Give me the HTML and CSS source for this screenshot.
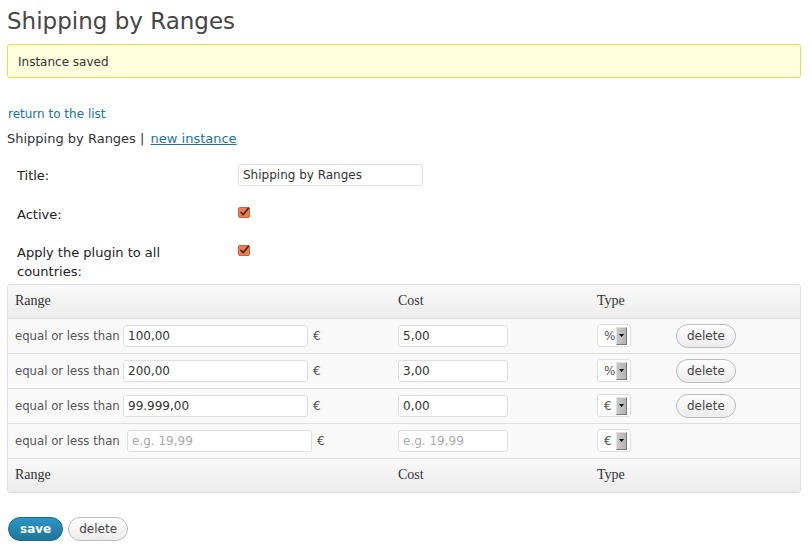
FILE: index.html
```html
<!DOCTYPE html>
<html lang="en">
<head>
<meta charset="utf-8">
<title>Shipping by Ranges</title>
<link rel="stylesheet" href="styles.css">
</head>
<body>
<div class="wrap">
  <h2 class="page-title">Shipping by Ranges</h2>
  <div class="notice"><p>Instance saved</p></div>
  <p class="back"><a href="#">return to the list</a></p>
  <p class="crumbs">Shipping by Ranges | <a class="ul" href="#">new instance</a></p>

  <table class="form-table">
    <tr class="r-title">
      <th>Title:</th>
      <td><input class="text title-input" type="text" value="Shipping by Ranges"></td>
    </tr>
    <tr class="r-check">
      <th>Active:</th>
      <td><svg class="cb" width="13" height="13" viewBox="0 0 13 13"><rect x="0.5" y="1.5" width="11" height="10" rx="1.5" fill="#ec7d55" stroke="#c9623f"/><path d="M3 6.4 L5.2 8.6 L10.4 2.2" fill="none" stroke="#4a2a1c" stroke-width="1.7" stroke-linecap="round" stroke-linejoin="round"/></svg></td>
    </tr>
    <tr class="r-apply">
      <th>Apply the plugin to all countries:</th>
      <td><svg class="cb" width="13" height="13" viewBox="0 0 13 13"><rect x="0.5" y="1.5" width="11" height="10" rx="1.5" fill="#ec7d55" stroke="#c9623f"/><path d="M3 6.4 L5.2 8.6 L10.4 2.2" fill="none" stroke="#4a2a1c" stroke-width="1.7" stroke-linecap="round" stroke-linejoin="round"/></svg></td>
    </tr>
  </table>

  <div class="ranges">
    <table class="widefat">
      <thead>
        <tr><th class="c-range">Range</th><th class="c-cost">Cost</th><th class="c-type">Type</th><th class="c-act"></th></tr>
      </thead>
      <tbody>
        <tr>
          <td><div class="cell"><span class="lbl">equal or less than</span><input class="text in-range" type="text" value="100,00"><span class="cur">€</span></div></td>
          <td><div class="cell"><input class="text in-cost" type="text" value="5,00"></div></td>
          <td><div class="cell"><span class="sel"><span class="sel-val">%</span><span class="sel-btn"><svg width="5" height="3" viewBox="0 0 5 3"><path d="M0 0H5L2.5 3Z" fill="#000"/></svg></span></span></div></td>
          <td><div class="cell"><button class="btn" type="button">delete</button></div></td>
        </tr>
        <tr>
          <td><div class="cell"><span class="lbl">equal or less than</span><input class="text in-range" type="text" value="200,00"><span class="cur">€</span></div></td>
          <td><div class="cell"><input class="text in-cost" type="text" value="3,00"></div></td>
          <td><div class="cell"><span class="sel"><span class="sel-val">%</span><span class="sel-btn"><svg width="5" height="3" viewBox="0 0 5 3"><path d="M0 0H5L2.5 3Z" fill="#000"/></svg></span></span></div></td>
          <td><div class="cell"><button class="btn" type="button">delete</button></div></td>
        </tr>
        <tr>
          <td><div class="cell"><span class="lbl">equal or less than</span><input class="text in-range" type="text" value="99.999,00"><span class="cur">€</span></div></td>
          <td><div class="cell"><input class="text in-cost" type="text" value="0,00"></div></td>
          <td><div class="cell"><span class="sel"><span class="sel-val">€</span><span class="sel-btn"><svg width="5" height="3" viewBox="0 0 5 3"><path d="M0 0H5L2.5 3Z" fill="#000"/></svg></span></span></div></td>
          <td><div class="cell"><button class="btn" type="button">delete</button></div></td>
        </tr>
        <tr>
          <td><div class="cell"><span class="lbl">equal or less than</span><input class="text in-range in-new" type="text" placeholder="e.g. 19,99"><span class="cur">€</span></div></td>
          <td><div class="cell"><input class="text in-cost" type="text" placeholder="e.g. 19,99"></div></td>
          <td><div class="cell"><span class="sel"><span class="sel-val">€</span><span class="sel-btn"><svg width="5" height="3" viewBox="0 0 5 3"><path d="M0 0H5L2.5 3Z" fill="#000"/></svg></span></span></div></td>
          <td><div class="cell"></div></td>
        </tr>
      </tbody>
      <tfoot>
        <tr><th>Range</th><th>Cost</th><th>Type</th><th></th></tr>
      </tfoot>
    </table>
  </div>

  <div class="actions">
    <button class="btn btn-primary" type="button">save</button>
    <button class="btn" type="button">delete</button>
  </div>
</div>
</body>
</html>
```
FILE: styles.css
```css
html, body {
  margin: 0;
  padding: 0;
  background: #fff;
}
body {
  font-family: "DejaVu Sans", sans-serif;
  font-size: 13px;
  line-height: 18.2px;
  color: #333;
}
.wrap {
  padding: 0 11px 0 7px;
}
a {
  color: #21759b;
  text-decoration: none;
}
a.ul {
  text-decoration: underline;
  margin-left: 2px;
}
.page-title {
  margin: 7px 0 0;
  font-size: 23px;
  line-height: 29px;
  font-weight: normal;
  color: #464646;
}
.notice {
  margin-top: 8px;
  background: #ffffe0;
  border: 1px solid #e6db55;
  border-radius: 3px;
  padding: 9px 10px 7px;
}
.notice p {
  margin: 0;
  font-size: 12px;
  line-height: 16px;
}
.back {
  margin: 28px 0 0 1px;
  font-size: 12px;
  line-height: 16px;
}
.crumbs {
  margin: 8px 0 0;
  font-size: 13px;
  line-height: 18.2px;
}
.form-table {
  margin-top: 8px;
  border-collapse: collapse;
  width: 100%;
}
.form-table th {
  width: 200px;
  padding: 10px 10px 10px;
  text-align: left;
  vertical-align: top;
  font-weight: normal;
  color: #222;
  line-height: 18.2px;
}
.form-table td {
  padding: 8px 10px 10px;
  vertical-align: top;
  line-height: 20px;
}
.r-title th {
  padding-top: 11px;
}
.r-check td, .r-apply td {
  padding-top: 10px;
}
.r-apply th {
  padding-bottom: 3px;
}
.cb {
  display: block;
  margin-left: 1px;
}
input.text {
  box-sizing: border-box;
  height: 22px;
  margin: 0;
  padding: 0 4px;
  border: 1px solid #dfdfdf;
  border-radius: 3px;
  background: #fff;
  font-family: "DejaVu Sans", sans-serif;
  font-size: 12px;
  color: #333;
}
input.text::placeholder {
  color: #aaa;
}
.title-input {
  display: block;
  width: 185px;
  margin-left: 1px !important;
}
.ranges {
  border: 1px solid #dfdfdf;
  border-radius: 3px;
  overflow: hidden;
}
.widefat {
  width: 100%;
  border-spacing: 0;
  table-layout: fixed;
}
.widefat th {
  font-family: "Liberation Serif", serif;
  font-weight: normal;
  font-size: 14px;
  line-height: 18px;
  color: #333;
  text-align: left;
  padding: 7px 7px 8px;
  background: linear-gradient(#f9f9f9, #ececec);
}
.widefat thead th {
  border-bottom: 1px solid #dfdfdf;
}
.c-range { width: 369px; }
.c-cost { width: 185px; }
.c-type { width: 65px; }
.widefat td {
  background: #f9f9f9;
  border-bottom: 1px solid #dfdfdf;
  padding: 6px 7px;
  font-size: 12px;
  color: #555;
  white-space: nowrap;
}
.cell {
  display: flex;
  align-items: center;
  height: 22px;
  line-height: 16px;
}
.lbl {
  display: block;
  width: 108px;
  font-size: 11.7px;
  overflow: visible;
}
.in-range {
  width: 185px;
  margin-left: 0 !important;
}
.in-new {
  margin-left: 4px !important;
}
.in-cost {
  width: 110px;
}
.cur {
  color: #555;
  margin-left: 5px;
}
.sel {
  box-sizing: border-box;
  display: inline-flex;
  align-items: center;
  width: 34px;
  height: 23px;
  border: 1px solid #dfdfdf;
  border-radius: 3px;
  background: #fff;
  padding-left: 6px;
}
.sel-val {
  font-size: 12px;
  color: #555;
  width: 12px;
}
.sel-btn {
  box-sizing: border-box;
  display: flex;
  align-items: center;
  justify-content: center;
  width: 11px;
  height: 18px;
  background: linear-gradient(to right, #c8c8c8, #b4b4b4);
  border-top: 1px solid #e0e0e0;
  border-left: 1px solid #e0e0e0;
  border-right: 1px solid #7a7a7a;
  border-bottom: 1px solid #7a7a7a;
}
.btn {
  box-sizing: border-box;
  height: 24px;
  padding: 0 10px;
  border: 1px solid #bbb;
  border-radius: 12px;
  background: linear-gradient(#fefefe, #ececec);
  font-family: "DejaVu Sans", sans-serif;
  font-size: 12px;
  line-height: 22px;
  color: #464646;
  margin-left: 0;
}
.actions {
  margin-top: 24px;
  display: flex;
  gap: 5px;
  padding-left: 1px;
}
.btn-primary {
  background: linear-gradient(#2a95c5, #21759b);
  border-color: #1e6a8d;
  color: #fff;
  font-weight: bold;
  padding: 0 11px;
}
```
